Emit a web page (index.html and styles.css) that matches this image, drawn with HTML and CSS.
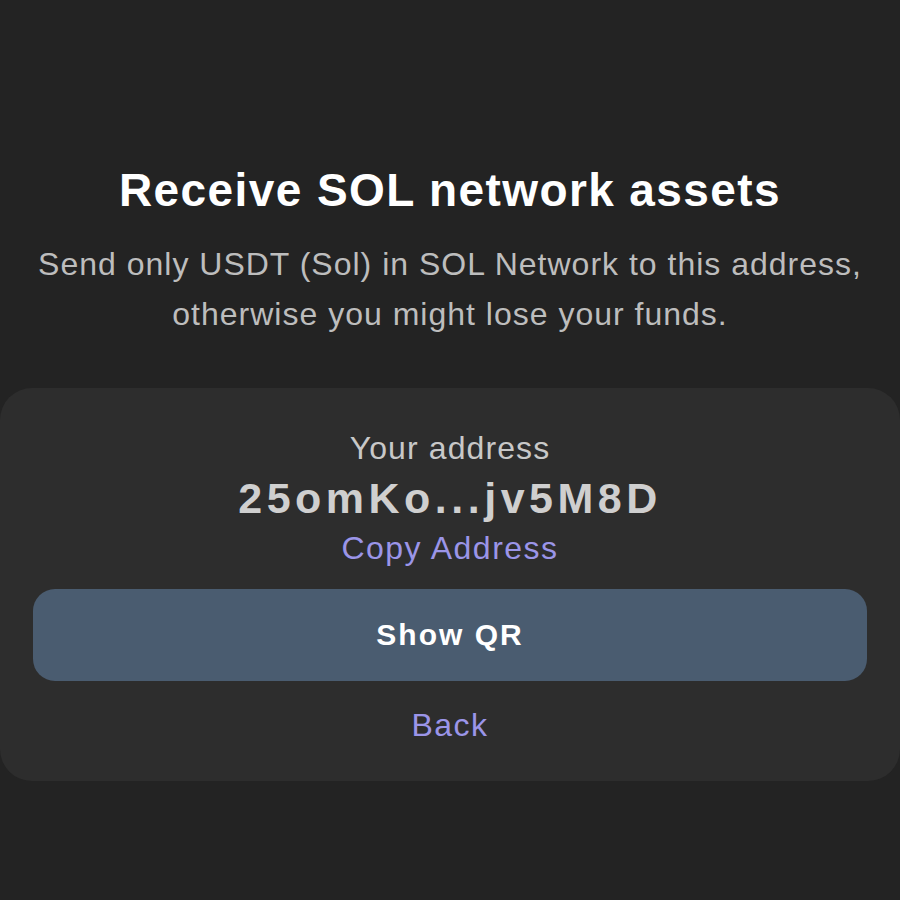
FILE: index.html
```html
<!DOCTYPE html>
<html>
<head>
<meta charset="utf-8">
<link rel="stylesheet" href="styles.css">
</head>
<body>
<div class="page">
  <header class="intro">
    <h1 class="title">Receive SOL network assets</h1>
    <p class="subtitle">Send only USDT (Sol) in SOL Network to this address,<br>otherwise you might lose your funds.</p>
  </header>
  <section class="card">
    <div class="label">Your address</div>
    <div class="address">25omKo...jv5M8D</div>
    <a class="link copy">Copy Address</a>
    <button class="btn">Show QR</button>
    <a class="link back">Back</a>
  </section>
</div>
</body>
</html>
```
FILE: styles.css
```css
html, body {
  margin: 0;
  padding: 0;
  background: #232323;
  width: 900px;
  height: 900px;
  overflow: hidden;
}
.page {
  display: flex;
  flex-direction: column;
  align-items: stretch;
  padding-top: 162px;
  font-family: "Liberation Sans", Arial, sans-serif;
}
.intro {
  text-align: center;
}
.title {
  margin: 0;
  font-weight: 700;
  font-size: 46px;
  line-height: 56px;
  letter-spacing: 1.4px;
  color: #ffffff;
}
.subtitle {
  margin: 21px 0 0;
  font-size: 32px;
  line-height: 50px;
  letter-spacing: 1px;
  color: #bdbdbd;
}
.card {
  margin-top: 49px;
  background: #2d2d2d;
  border-radius: 32px;
  padding: 40px 33px 36px;
  display: flex;
  flex-direction: column;
  align-items: center;
}
.label {
  font-size: 32px;
  line-height: 40px;
  letter-spacing: 1.1px;
  color: #c8c8c8;
}
.address {
  margin-top: 6px;
  font-size: 43px;
  font-weight: 700;
  letter-spacing: 4.5px;
  line-height: 48px;
  color: #cfcfcf;
}
.link {
  font-size: 32px;
  line-height: 40px;
  letter-spacing: 1.5px;
  color: #9b95e8;
}
.copy {
  margin-top: 6px;
}
.btn {
  margin-top: 21px;
  width: 100%;
  height: 92px;
  border: none;
  border-radius: 22px;
  background: #4a5c70;
  color: #ffffff;
  font-family: "Liberation Sans", Arial, sans-serif;
  font-weight: 700;
  font-size: 30px;
  letter-spacing: 2px;
}
.back {
  margin-top: 24px;
}
```
